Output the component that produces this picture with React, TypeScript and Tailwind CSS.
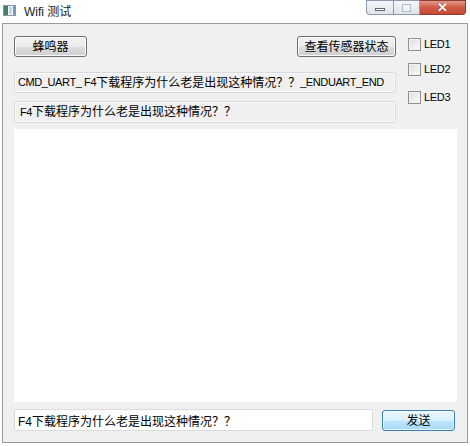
import React, { useState } from 'react';

const FONT = "font-['Liberation_Sans','Noto_Sans_CJK_SC',sans-serif]";

const WinButton: React.FC<{ label: string; width: string; primary?: boolean }> = ({ label, width, primary }) => (
  <button
    className={`${width} h-[21px] rounded-[3px] border text-[12px] leading-none text-black flex items-center justify-center ${
      primary
        ? 'border-[#3c7fb1] bg-[linear-gradient(#eaf6fd_0%,#d9f0fc_50%,#bee6fd_51%,#a7d9f5_100%)] shadow-[inset_0_0_0_1px_#ffffffaa]'
        : 'border-[#707070] bg-[linear-gradient(#f2f2f2_0%,#ebebeb_50%,#dddddd_51%,#cfcfcf_100%)] shadow-[inset_0_0_0_1px_#fcfcfc]'
    }`}
  >
    {label}
  </button>
);

const LedBox: React.FC<{ label: string; className?: string }> = ({ label, className }) => {
  const [on, setOn] = useState(false);
  return (
    <label className={`flex items-center gap-[3px] text-[11px] tracking-[-0.3px] leading-none text-black cursor-pointer ${className ?? ''}`}>
      <span
        onClick={() => setOn(!on)}
        className="w-[13px] h-[13px] border border-[#8e8f8f] bg-[linear-gradient(135deg,#dcdcdc,#fbfbfb)] shadow-[inset_0_0_0_1px_#f4f4f4] flex items-center justify-center text-[10px]"
      >
        {on ? '✓' : ''}
      </span>
      {label}
    </label>
  );
};

// Latin runs are set a size smaller than the CJK runs, like Tahoma next to SimSun
const Mixed: React.FC<{ parts: [string, boolean][] }> = ({ parts }) => (
  <>
    {parts.map(([t, cjk], i) => (
      <span key={i} className={cjk ? 'text-[12px]' : 'text-[11px] tracking-[-0.4px]'}>
        {t}
      </span>
    ))}
  </>
);

const App: React.FC = () => {
  const [sendText, setSendText] = useState('F4下载程序为什么老是出现这种情况？？');

  return (
    <div className={`w-[470px] h-[446px] bg-white overflow-hidden flex flex-col ${FONT}`}>
      {/* title bar */}
      <div className="h-[23px] flex items-start shrink-0">
        <svg width="13" height="11" viewBox="0 0 13 11" className="ml-[3px] mt-[5px]">
          <rect x="0.5" y="0.5" width="12" height="10" fill="#f4f6f8" stroke="#8a96a0" />
          <rect x="1" y="1" width="4" height="9" fill="#3f7f6f" />
          <rect x="6" y="2" width="3" height="7" fill="#c9d6de" />
          <rect x="10" y="1" width="2" height="9" fill="#6d9fc3" />
        </svg>
        <span className="ml-[8px] mt-[3px] text-[12px] text-[#101c2c]">Wifi 测试</span>
        <div className="ml-auto mr-[4px] flex h-[15px]">
          <div className="w-[27px] border border-[#8b9aac] border-r-0 rounded-bl-[4px] bg-[linear-gradient(#f4f6f9,#dfe5ec)] flex items-end justify-center pb-[3px]">
            <div className="w-[10px] h-[3px] border border-[#5b6675] bg-white" />
          </div>
          <div className="w-[27px] border border-[#8b9aac] bg-[linear-gradient(#f4f6f9,#dfe5ec)] flex items-center justify-center">
            <div className="w-[9px] h-[8px] border border-[#b5bcc5] bg-[#f0f2f5]" />
          </div>
          <div className="w-[46px] border border-[#8b3a32] border-l-0 rounded-br-[4px] bg-[linear-gradient(#e59a8c,#cf5a46_50%,#c54a36)] flex items-center justify-center">
            <span className="text-[13px] font-bold leading-none text-white [text-shadow:0_0_1px_#5a1a10]">✕</span>
          </div>
        </div>
      </div>

      {/* client area */}
      <div className="mx-[2px] w-[466px] h-[420px] border border-[#9a9a9a] bg-[#f0f0f0] pl-[11px] pr-[9px] pt-[12px] flex flex-col">
        <div className="flex">
          <div className="w-[382px] flex flex-col">
            <div className="flex justify-between">
              <WinButton label="蜂鸣器" width="w-[73px]" />
              <WinButton label="查看传感器状态" width="w-[99px]" />
            </div>
            <div className="mt-[15px] h-[21px] border border-[#dadada] rounded-[2px] bg-[#f0f0f0] shadow-[inset_0_0_0_1px_#fafafa] flex items-center px-[3px] text-black whitespace-nowrap overflow-hidden">
              <Mixed
                parts={[
                  ['CMD_UART_ F4', false],
                  ['下载程序为什么老是出现这种情况？？', true],
                  [' _ENDUART_END', false],
                ]}
              />
            </div>
            <div className="mt-[8px] h-[22px] border border-[#dadada] rounded-[2px] bg-[#f0f0f0] shadow-[inset_0_0_0_1px_#fafafa] flex items-center px-[5px] text-black whitespace-nowrap overflow-hidden">
              <Mixed
                parts={[
                  ['F4', false],
                  ['下载程序为什么老是出现这种情况？？', true],
                ]}
              />
            </div>
          </div>
          <div className="ml-[12px] flex flex-col">
            <LedBox label="LED1" className="mt-[2px]" />
            <LedBox label="LED2" className="mt-[12px]" />
            <LedBox label="LED3" className="mt-[15px]" />
          </div>
        </div>

        <textarea className="mt-[6px] h-[273px] w-[443px] bg-white resize-none outline-none border-0" />

        <div className="mt-[7px] flex items-start">
          <input
            className="w-[359px] h-[22px] border border-[#dadada] rounded-[2px] bg-white px-[3px] text-[12px] text-black outline-none"
            value={sendText}
            onChange={(e) => setSendText(e.target.value)}
          />
          <div className="ml-[9px] mt-[1px]">
            <WinButton label="发送" width="w-[73px]" primary />
          </div>
        </div>
      </div>
    </div>
  );
};

export default App;
